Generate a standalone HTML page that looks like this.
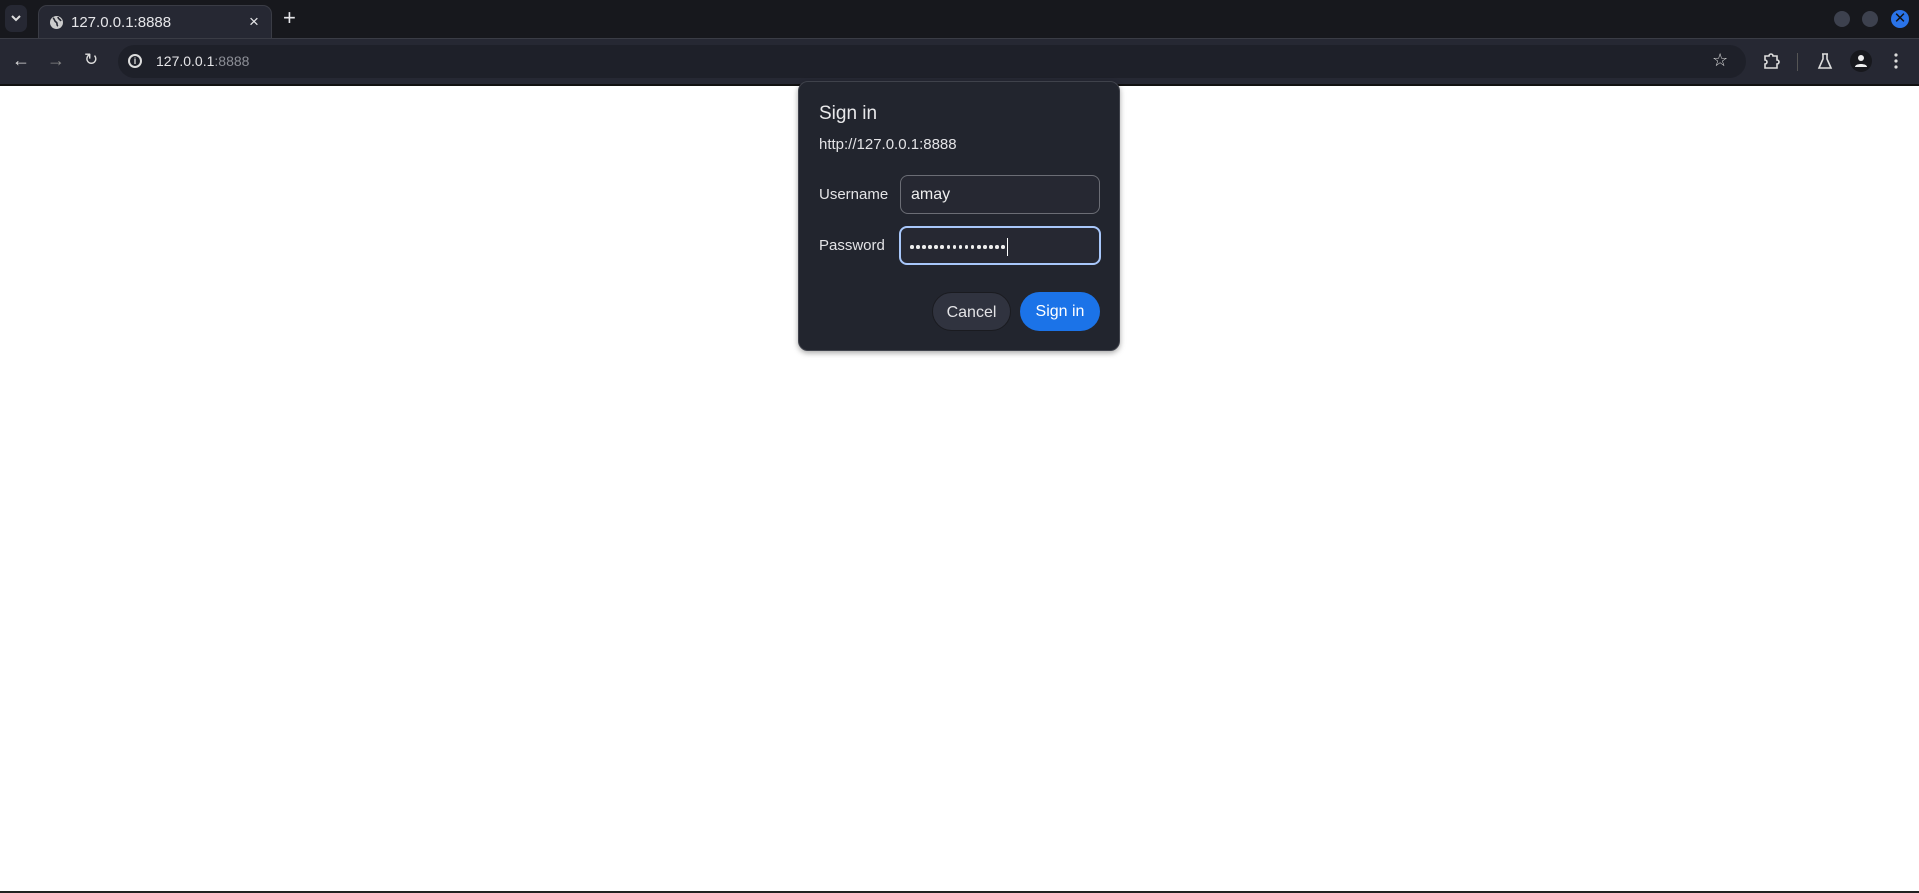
<!DOCTYPE html>
<html><head><meta charset="utf-8"><style>
*{margin:0;padding:0;box-sizing:border-box}
body{width:1919px;height:893px;background:#fff;position:relative;overflow:hidden;font-family:"Liberation Sans","DejaVu Sans",sans-serif}
.tabstrip{position:absolute;left:0;top:0;width:1919px;height:39px;background:#17181d}
.toolbar{position:absolute;left:0;top:38px;width:1919px;height:46px;background:#262833;border-top:1px solid #3a3c45}
.line{position:absolute;left:0;top:84px;width:1919px;height:2px;background:#111}
.tab{position:absolute;left:38px;top:5px;width:234px;height:35px;background:#262833;border:1px solid #3a3c45;border-bottom:none;border-radius:9px 9px 0 0;color:#e6e6e9;font-size:15px}
.abs{position:absolute}
.omni{position:absolute;left:118px;top:45px;width:1628px;height:33px;background:#1e2029;border-radius:17px}
.dlg{position:absolute;left:798px;top:81px;width:322px;height:270px;background:#22252e;border:1px solid #3f424b;border-radius:10px;box-shadow:0 2px 6px rgba(0,0,0,.35);color:#e3e3e6}
.in{position:absolute;left:101px;width:200px;height:39px;border:1px solid #6b6d75;border-radius:8px;background:#262832;color:#eee;font-size:16px;padding-left:10px;line-height:37px}
.btn{position:absolute;top:210px;height:39px;border-radius:20px;font-size:16px;line-height:39px;text-align:center}
</style></head><body>
<div class="tabstrip"></div>
<div class="abs" style="left:5px;top:5px;width:22px;height:27px;background:#262833;border-radius:7px"></div>
<svg class="abs" style="left:10px;top:13px" width="12" height="10"><path d="M2 3l4 4 4-4" stroke="#ddd" stroke-width="2" fill="none"/></svg>
<div class="tab">
<svg class="abs" style="left:10px;top:9px" width="15" height="15"><circle cx="7.5" cy="7.5" r="6.5" fill="#ccc"/><path d="M4 3c2 1 1 3 3 4s0 3 2 4M9 2c0 2 2 2 3 4" stroke="#262833" stroke-width="1.6" fill="none"/></svg>
<span class="abs" style="left:32px;top:8px">127.0.0.1:8888</span>
<span class="abs" style="left:210px;top:6px;font-size:17px">×</span>
</div>
<span class="abs" style="left:283px;top:5px;color:#e6e6e9;font-size:22px">+</span>
<div class="abs" style="left:1834px;top:11px;width:16px;height:16px;border-radius:50%;background:#3d414e"></div>
<div class="abs" style="left:1862px;top:11px;width:16px;height:16px;border-radius:50%;background:#3d414e"></div>
<div class="abs" style="left:1891px;top:10px;width:18px;height:18px;border-radius:50%;background:#2a73e8;color:#111;font-size:15px;font-weight:bold;text-align:center;line-height:18px">✕</div>
<div class="toolbar"></div>
<div class="omni"></div>
<span class="abs" style="left:12px;top:50px;color:#ddd;font-size:18px">←</span>
<span class="abs" style="left:47px;top:50px;color:#888;font-size:18px">→</span>
<span class="abs" style="left:84px;top:50px;color:#ddd;font-size:17px">↻</span>
<div class="abs" style="left:128px;top:54px;width:14px;height:14px;border:2px solid #ddd;border-radius:50%;color:#ddd;font-size:9px;text-align:center;line-height:10px;font-weight:bold">i</div>
<span class="abs" style="left:156px;top:53px;color:#e6e6e9;font-size:14px">127.0.0.1<span style="color:#8d8f97">:8888</span></span>
<span class="abs" style="left:1712px;top:50px;color:#ddd;font-size:18px">☆</span>
<svg class="abs" style="left:1762px;top:52px" width="18" height="18"><path d="M3 4h4a2 2 0 0 1 4 0h4v4a2 2 0 0 1 0 4v4H3v-4a2 2 0 0 0 0-4z" stroke="#ddd" stroke-width="1.6" fill="none"/></svg>
<div class="abs" style="left:1797px;top:53px;width:1px;height:18px;background:#555"></div>
<svg class="abs" style="left:1817px;top:52px" width="16" height="18"><path d="M5 2h6M6 2v5L2 16h12L10 7V2" stroke="#ddd" stroke-width="1.6" fill="none"/></svg>
<div class="abs" style="left:1850px;top:50px;width:22px;height:22px;border-radius:50%;background:#17181d"></div>
<svg class="abs" style="left:1853px;top:53px" width="16" height="16"><circle cx="8" cy="5" r="3" fill="#eee"/><path d="M2 14c0-4 12-4 12 0z" fill="#eee"/></svg>
<svg class="abs" style="left:1893px;top:52px" width="6" height="18"><circle cx="3" cy="3" r="1.6" fill="#ddd"/><circle cx="3" cy="9" r="1.6" fill="#ddd"/><circle cx="3" cy="15" r="1.6" fill="#ddd"/></svg>
<div class="line"></div>
<div class="abs" style="left:0;top:891px;width:1919px;height:2px;background:#222"></div>
<div class="dlg">
<div class="abs" style="left:20px;top:21px;font-size:19px;color:#e8e8ea">Sign in</div>
<div class="abs" style="left:20px;top:54px;font-size:15px">http://127.0.0.1:8888</div>
<div class="abs" style="left:20px;top:104px;font-size:15px">Username</div>
<div class="in" style="top:93px">amay</div>
<div class="abs" style="left:20px;top:155px;font-size:15px">Password</div>
<div class="in" style="top:144px;border:2px solid #a8c7fa;left:100px;width:202px;padding-left:9px"><span style="display:inline-flex;gap:2.6px;vertical-align:middle"><i></i><i></i><i></i><i></i><i></i><i></i><i></i><i></i><i></i><i></i><i></i><i></i><i></i><i></i><i></i><i></i></span><span style="display:inline-block;width:1px;height:18px;background:#fff;vertical-align:middle;margin-left:2px"></span></div>
<style>.in i{display:block;width:3.5px;height:3.5px;border-radius:50%;background:#eee}</style>
<div class="btn" style="left:133px;width:79px;background:#30333f;border:1px solid #1a1b20;color:#e3e3e6">Cancel</div>
<div class="btn" style="left:221px;width:80px;background:#1b73e8;color:#fff">Sign in</div>
</div>
</body></html>
